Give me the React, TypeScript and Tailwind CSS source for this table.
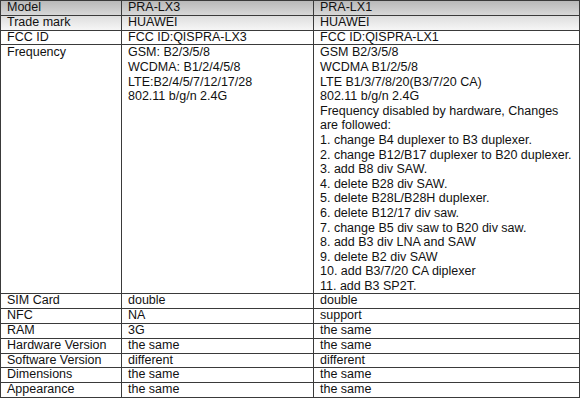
const rows: { label: string; a: string[]; b: string[]; head?: 1 | 2 }[] = [
  { label: "Model", a: ["PRA-LX3"], b: ["PRA-LX1"], head: 1 },
  { label: "Trade mark", a: ["HUAWEI"], b: ["HUAWEI"], head: 2 },
  { label: "FCC ID", a: ["FCC ID:QISPRA-LX3"], b: ["FCC ID:QISPRA-LX1"] },
  {
    label: "Frequency",
    a: ["GSM: B2/3/5/8", "WCDMA: B1/2/4/5/8", "LTE:B2/4/5/7/12/17/28", "802.11 b/g/n 2.4G"],
    b: [
      "GSM B2/3/5/8",
      "WCDMA B1/2/5/8",
      "LTE B1/3/7/8/20(B3/7/20 CA)",
      "802.11 b/g/n 2.4G",
      "Frequency disabled by hardware, Changes",
      "are followed:",
      "1. change B4 duplexer to B3 duplexer.",
      "2. change B12/B17 duplexer to B20 duplexer.",
      "3. add B8 div SAW.",
      "4. delete B28 div SAW.",
      "5. delete B28L/B28H duplexer.",
      "6. delete B12/17 div saw.",
      "7. change B5 div saw to B20 div saw.",
      "8. add B3 div LNA and SAW",
      "9. delete B2 div SAW",
      "10. add B3/7/20 CA diplexer",
      "11. add B3 SP2T.",
    ],
  },
  { label: "SIM Card", a: ["double"], b: ["double"] },
  { label: "NFC", a: ["NA"], b: ["support"] },
  { label: "RAM", a: ["3G"], b: ["the same"] },
  { label: "Hardware Version", a: ["the same"], b: ["the same"] },
  { label: "Software Version", a: ["different"], b: ["different"] },
  { label: "Dimensions", a: ["the same"], b: ["the same"] },
  { label: "Appearance", a: ["the same"], b: ["the same"] },
];

const Lines = ({ items }: { items: string[] }) => (
  <>
    {items.map((t, i) => (
      <div key={i} className="whitespace-nowrap">
        {t}
      </div>
    ))}
  </>
);

export default function App() {
  return (
    <div className="w-[580px] h-[400px] bg-white overflow-hidden">
      <table
        className="border-collapse table-fixed w-[579px] text-[12.5px] leading-[13.8px] text-[#111]"
        style={{ fontFamily: '"Liberation Sans", Arial, sans-serif' }}
      >
        <colgroup>
          <col className="w-[121px]" />
          <col className="w-[192px]" />
          <col className="w-[266px]" />
        </colgroup>
        <tbody>
          {rows.map((r) => {
            const bg =
              r.head === 1
                ? "bg-gradient-to-b from-[#b9b9b9] to-[#dadada]"
                : r.head === 2
                ? "bg-gradient-to-b from-[#dcdcdc] to-[#f6f6f6]"
                : "bg-white";
            const lh = r.label === "Frequency" ? "leading-[14.6px]" : "";
            return (
              <tr key={r.label} className={bg}>
                <td className={`border border-[#3a3a3a] pl-[6px] align-top ${lh}`}>{r.label}</td>
                <td className={`border border-[#3a3a3a] pl-[6px] align-top ${lh}`}>
                  <Lines items={r.a} />
                </td>
                <td className={`border border-[#3a3a3a] pl-[6px] align-top ${lh}`}>
                  <Lines items={r.b} />
                </td>
              </tr>
            );
          })}
        </tbody>
      </table>
    </div>
  );
}
